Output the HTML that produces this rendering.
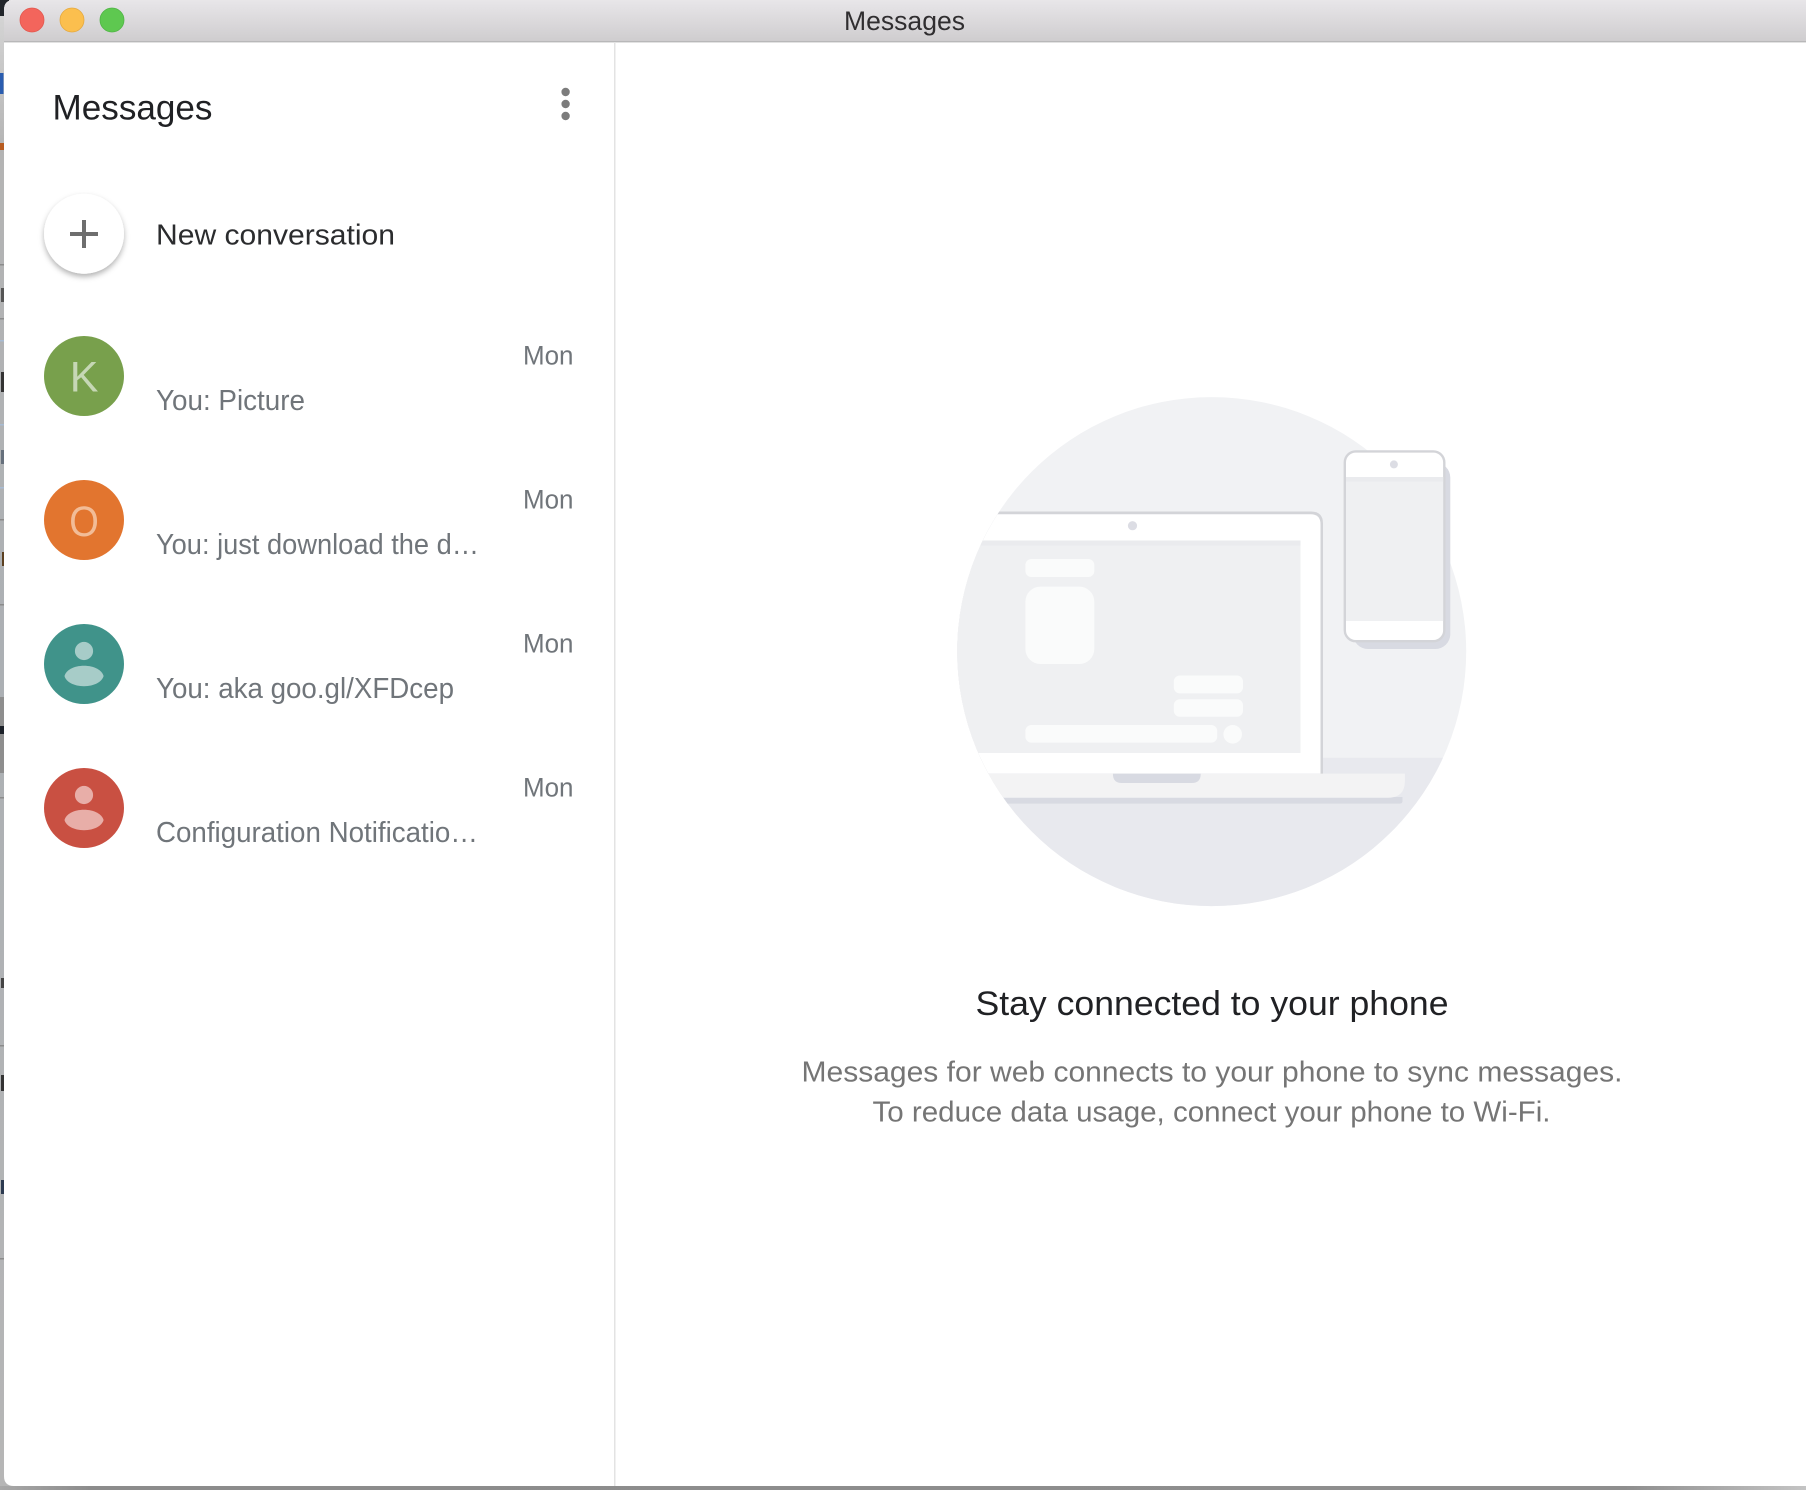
<!DOCTYPE html>
<html>
<head>
<meta charset="utf-8">
<title>Messages</title>
<style>
html,body{margin:0;padding:0;width:1806px;height:1490px;overflow:hidden;background:#b4b4b4}
svg{display:block;position:absolute;left:0;top:0}
text{font-family:"Liberation Sans",Arial,sans-serif}
</style>
</head>
<body>
<svg width="1806" height="1490" viewBox="0 0 1806 1490" xmlns="http://www.w3.org/2000/svg">
<defs>
<linearGradient id="tb" x1="0" y1="0" x2="0" y2="1"><stop offset="0" stop-color="#e8e6e9"/><stop offset="1" stop-color="#cfcdcf"/></linearGradient>
<linearGradient id="strip" x1="0" y1="0" x2="0" y2="1"><stop offset="0" stop-color="#d8d8d8"/><stop offset=".1" stop-color="#b4b4b4"/><stop offset=".45" stop-color="#acb0b4"/><stop offset="1" stop-color="#b6b6b6"/></linearGradient>
<linearGradient id="bot" x1="0" y1="0" x2="1" y2="0"><stop offset="0" stop-color="#a8a8a8"/><stop offset=".05" stop-color="#8c8c8c"/><stop offset=".9" stop-color="#8e8e8e"/><stop offset="1" stop-color="#c4c4c4"/></linearGradient>
<clipPath id="disc"><circle cx="1211.7" cy="651.6" r="254.5"/></clipPath>
<clipPath id="win"><path d="M14 0H1806V1486H14Q4 1486 4 1476V10Q4 0 14 0Z"/></clipPath>
<filter id="fab" x="-30%" y="-30%" width="160%" height="170%"><feDropShadow dx="0" dy="3" stdDeviation="3" flood-color="#000" flood-opacity=".3"/></filter>
</defs>

<!-- desktop peeking behind -->
<rect x="0" y="0" width="1806" height="1490" fill="url(#strip)"/>
<rect x="0" y="0" width="9" height="16" fill="#22262b"/>
<rect x="0" y="73" width="3.5" height="21" fill="#2a5db0"/>
<rect x="0" y="143" width="4" height="7" fill="#b85c20"/>
<rect x="0" y="264" width="4" height="1.5" fill="#8c8c8c"/>
<rect x="1" y="288" width="3" height="14" fill="#555"/>
<rect x="0" y="318" width="4" height="1.5" fill="#8c8c8c"/>
<rect x="0" y="340" width="4" height="1.5" fill="#a8bcd4"/>
<rect x="1" y="372" width="3" height="20" fill="#333"/>
<rect x="0" y="424" width="4" height="1.5" fill="#a8bcd4"/>
<rect x="1" y="450" width="3" height="14" fill="#66707c"/>
<rect x="0" y="487" width="4" height="1.5" fill="#a8bcd4"/>
<rect x="0" y="519" width="4" height="1.5" fill="#8c8c8c"/>
<rect x="2" y="552" width="2" height="14" fill="#5c4020"/>
<rect x="0" y="604" width="4" height="1.5" fill="#8c8c8c"/>
<rect x="0" y="697" width="4" height="76" fill="#8e8e8e"/>
<rect x="0" y="726" width="4" height="8" fill="#1c2028"/>
<rect x="0" y="797" width="4" height="1.5" fill="#8c8c8c"/>
<rect x="1" y="978" width="3" height="10" fill="#444"/>
<rect x="0" y="1045" width="4" height="1.5" fill="#8c8c8c"/>
<rect x="1" y="1075" width="3" height="16" fill="#333"/>
<rect x="1" y="1180" width="3" height="14" fill="#2c3a50"/>
<rect x="0" y="1258" width="4" height="1.5" fill="#8c8c8c"/>
<rect x="0" y="1486" width="1806" height="4" fill="url(#bot)"/>

<!-- window -->
<g clip-path="url(#win)">
<rect x="0" y="0" width="1806" height="1490" fill="#fff"/>
<rect x="0" y="0" width="1806" height="41" fill="url(#tb)"/>
<rect x="0" y="41" width="1806" height="1.4" fill="#b8b8b9"/>
<rect x="614" y="42" width="1.5" height="1444" fill="#e3e3e3"/>
</g>

<!-- traffic lights -->
<circle cx="32" cy="20" r="12" fill="#f3655c" stroke="#e2574e" stroke-width=".8"/>
<circle cx="72" cy="20" r="12" fill="#fbbf4e" stroke="#e5a93e" stroke-width=".8"/>
<circle cx="112" cy="20" r="12" fill="#5ec850" stroke="#4fb445" stroke-width=".8"/>
<text x="844" y="30" font-size="27" fill="#302e30" textLength="121" lengthAdjust="spacingAndGlyphs">Messages</text>

<!-- sidebar header -->
<text x="52.5" y="119.3" font-size="35" fill="#202124" textLength="160" lengthAdjust="spacingAndGlyphs">Messages</text>
<circle cx="565.6" cy="92" r="4.2" fill="#7c7c7c"/>
<circle cx="565.6" cy="104" r="4.2" fill="#7c7c7c"/>
<circle cx="565.6" cy="116" r="4.2" fill="#7c7c7c"/>

<!-- new conversation -->
<circle cx="84" cy="233.7" r="40" fill="#fff" filter="url(#fab)"/>
<rect x="70" y="232" width="28" height="4" fill="#6e6e6e"/>
<rect x="82" y="220" width="4" height="28" fill="#6e6e6e"/>
<text x="156" y="244.3" font-size="29" fill="#2b2c2e" textLength="239" lengthAdjust="spacingAndGlyphs">New conversation</text>

<!-- conversations -->
<circle cx="84" cy="376" r="40" fill="#78a04c"/>
<text x="69.8" y="391.6" font-size="43" fill="#c6d7b5">K</text>
<text x="523" y="364.4" font-size="27" fill="#70757a" textLength="50.5" lengthAdjust="spacingAndGlyphs">Mon</text>
<text x="156" y="409.8" font-size="28.5" fill="#70757a" textLength="149" lengthAdjust="spacingAndGlyphs">You: Picture</text>

<circle cx="84" cy="520" r="40" fill="#e2752f"/>
<text x="69.2" y="535.8" font-size="43" fill="#f2bc97" textLength="29.6" lengthAdjust="spacingAndGlyphs">O</text>
<text x="523" y="508.4" font-size="27" fill="#70757a" textLength="50.5" lengthAdjust="spacingAndGlyphs">Mon</text>
<text x="156" y="553.8" font-size="28.5" fill="#70757a" textLength="323" lengthAdjust="spacingAndGlyphs">You: just download the d…</text>

<circle cx="84" cy="664" r="40" fill="#40938a"/>
<circle cx="84" cy="651" r="9.1" fill="#a7ccc8"/>
<path d="M64.5 676C66 670 74 665.7 84 665.7C94 665.7 102 670 103.6 676C102 682 94 686.2 84 686.2C74 686.2 66 682 64.5 676Z" fill="#a7ccc8"/>
<text x="523" y="652.4" font-size="27" fill="#70757a" textLength="50.5" lengthAdjust="spacingAndGlyphs">Mon</text>
<text x="156" y="697.8" font-size="28.5" fill="#70757a" textLength="298" lengthAdjust="spacingAndGlyphs">You: aka goo.gl/XFDcep</text>

<circle cx="84" cy="808" r="40" fill="#c95042"/>
<circle cx="84" cy="795" r="9.1" fill="#e8aea8"/>
<path d="M64.5 820C66 814 74 809.7 84 809.7C94 809.7 102 814 103.6 820C102 826 94 830.2 84 830.2C74 830.2 66 826 64.5 820Z" fill="#e8aea8"/>
<text x="523" y="796.4" font-size="27" fill="#70757a" textLength="50.5" lengthAdjust="spacingAndGlyphs">Mon</text>
<text x="156" y="841.8" font-size="28.5" fill="#70757a" textLength="322" lengthAdjust="spacingAndGlyphs">Configuration Notificatio…</text>

<!-- illustration -->
<circle cx="1211.7" cy="651.6" r="254.5" fill="#f1f2f4"/>
<g clip-path="url(#disc)">
<rect x="950" y="757.8" width="530" height="150" fill="#e8e9ee"/>
<!-- base shadow -->
<path d="M950 797H1402.5V801Q1402.5 803.6 1400 803.6H950Z" fill="#d8dae2"/>
<!-- laptop frame -->
<path d="M950 511.5H1311Q1323 511.5 1323 523.5V774H950Z" fill="#d3d4d8"/>
<path d="M950 514.3H1310.5Q1320.5 514.3 1320.5 524.3V773.6H950Z" fill="#fff"/>
<!-- screen -->
<rect x="950" y="540.5" width="350.5" height="212.5" fill="#eff0f2"/>
<rect x="950" y="540.5" width="350.5" height="5.1" fill="#eaebee"/>
<circle cx="1132.5" cy="525.7" r="4.6" fill="#dcdde4"/>
<!-- bubbles -->
<rect x="1025.4" y="559" width="68.9" height="18" rx="6" fill="#fafbfb"/>
<rect x="1025.4" y="586.6" width="68.9" height="77.4" rx="15" fill="#fafbfb"/>
<rect x="1173.8" y="675.5" width="69.2" height="17.9" rx="6" fill="#fafbfb"/>
<rect x="1173.8" y="699.2" width="69.2" height="17.6" rx="6" fill="#fafbfb"/>
<rect x="1025.4" y="725" width="191.8" height="17.6" rx="6" fill="#fafbfb"/>
<circle cx="1232.7" cy="734.3" r="9.3" fill="#fafbfb"/>
<!-- base -->
<path d="M950 773.6H1404.9V780.7Q1404.9 797.7 1387.9 797.7H950Z" fill="#f3f3f4"/>
<path d="M1112.9 773.6H1200.7V774Q1200.7 783 1191.7 783H1121.9Q1112.9 783 1112.9 774Z" fill="#d8dae2"/>
</g>
<!-- phone -->
<rect x="1353" y="462.6" width="97.3" height="186.4" rx="15" fill="#d8dae2"/>
<rect x="1344.8" y="451.4" width="99.5" height="189.8" rx="11" fill="#fff" stroke="#d3d4d8" stroke-width="2.4"/>
<rect x="1346" y="477" width="97.1" height="144" fill="#eff0f2"/>
<rect x="1346" y="477" width="97.1" height="4.6" fill="#eaebee"/>
<circle cx="1393.9" cy="464.4" r="4" fill="#dcdde4"/>

<!-- copy -->
<text x="975.5" y="1015" font-size="34" fill="#202124" textLength="473" lengthAdjust="spacingAndGlyphs">Stay connected to your phone</text>
<text x="801.5" y="1081.7" font-size="29" fill="#757575" textLength="821" lengthAdjust="spacingAndGlyphs">Messages for web connects to your phone to sync messages.</text>
<text x="872.5" y="1121.7" font-size="29" fill="#757575" textLength="678" lengthAdjust="spacingAndGlyphs">To reduce data usage, connect your phone to Wi-Fi.</text>
</svg>
</body>
</html>
